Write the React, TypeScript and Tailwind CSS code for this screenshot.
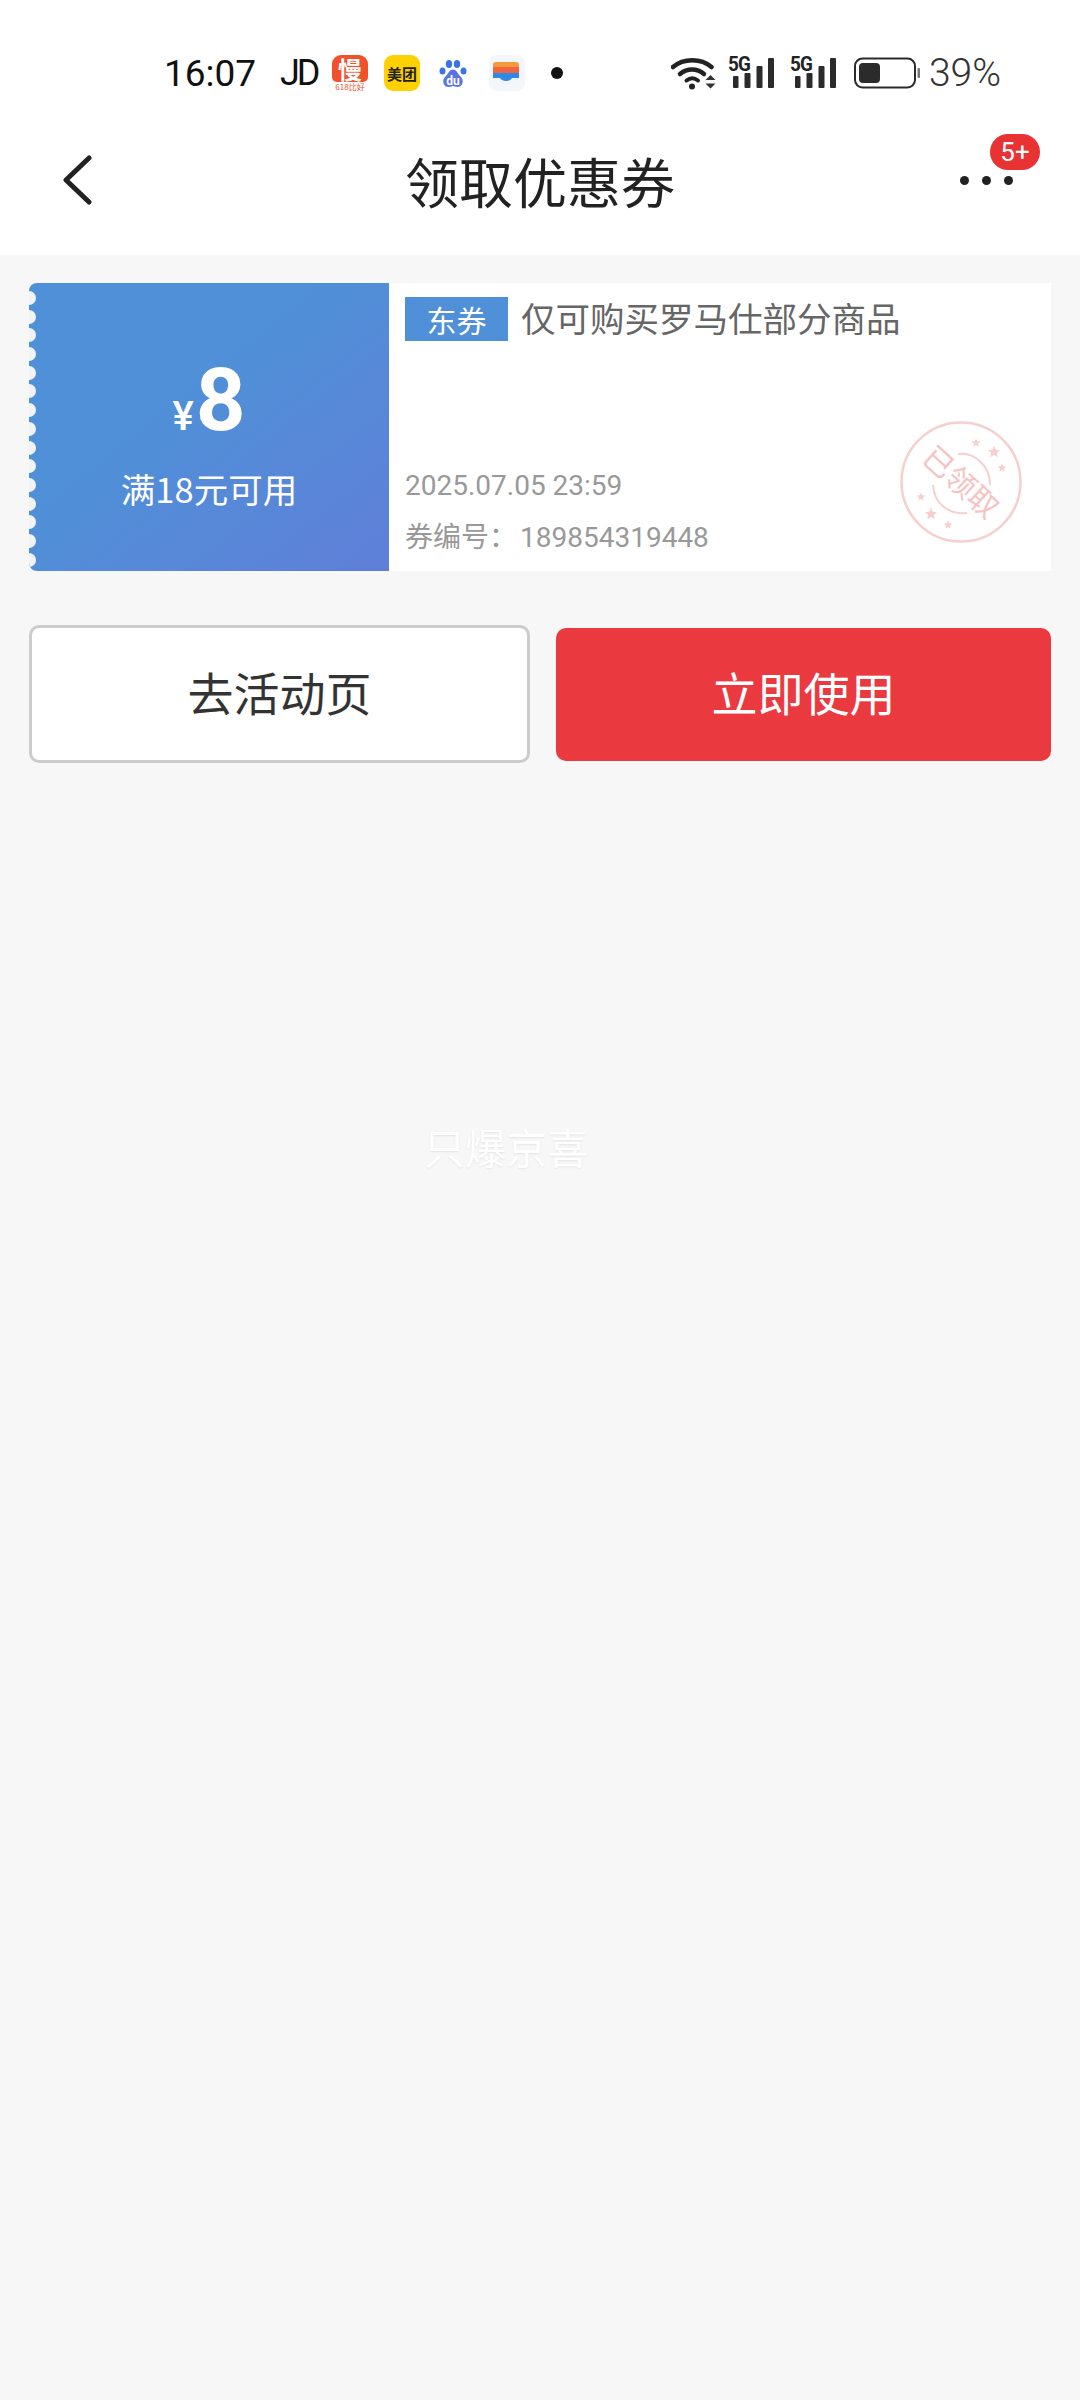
const CJK = '"Noto Sans CJK SC", "Noto Sans", sans-serif'

const SignalIcon = () => (
  <div className="relative w-[48px] h-[32px]">
    <span className="absolute left-0 top-[-3px] text-[21px] leading-[21px] font-bold text-[#222] tracking-[-1px] font-['Roboto',sans-serif] scale-x-90 origin-left">5G</span>
    <svg width="48" height="32" viewBox="0 0 48 32" className="absolute left-0 top-0" fill="#2b2b2b">
      <rect x="5" y="19" width="5.5" height="12" rx="1" />
      <rect x="16.5" y="16" width="6" height="15" rx="1" />
      <rect x="28.5" y="9" width="6" height="22" rx="1" />
      <rect x="40" y="1" width="6" height="30" rx="1" />
    </svg>
  </div>
)

const WifiIcon = () => (
  <svg width="46" height="34" viewBox="0 0 46 34" fill="none">
    <path d="M2 11C12.500 2 30 2 40.500 11" stroke="#222" strokeWidth="4.500" strokeLinecap="round" />
    <path d="M9 18C16 12 26 12 33 18" stroke="#222" strokeWidth="4.500" strokeLinecap="round" />
    <path d="M15.500 24.500C19 21.800 23.500 21.800 27 24.500" stroke="#222" strokeWidth="4" strokeLinecap="round" />
    <circle cx="21" cy="30.500" r="3" fill="#222" />
    <path d="M34.500 24L39.500 19L44.500 24ZM34.500 27.500L39.500 32.500L44.500 27.500Z" fill="#333" />
  </svg>
)

const BatteryIcon = () => (
  <svg width="66" height="32" viewBox="0 0 66 32" fill="none">
    <rect x="1" y="1.500" width="60" height="29" rx="7.500" stroke="#2b2b2b" strokeWidth="2" />
    <rect x="5" y="6" width="21" height="20" rx="4" fill="#2b2b2b" />
    <rect x="63.500" y="11" width="2.500" height="10" rx="1" fill="#777" />
  </svg>
)

const BaiduIcon = () => (
  <svg width="28" height="30" viewBox="0 0 28 30">
    <ellipse cx="3.500" cy="13" rx="3" ry="3.500" fill="#3b74e6" />
    <ellipse cx="10" cy="6" rx="3.200" ry="4" fill="#3b74e6" />
    <ellipse cx="18" cy="6" rx="3.200" ry="4" fill="#3b74e6" />
    <ellipse cx="24.500" cy="13" rx="3" ry="3.500" fill="#3b74e6" />
    <path d="M14 11.500C10 11.500 9.500 16 6 19C2.500 22.500 4.500 29 9.500 29C12 29 12.500 28 14 28C15.500 28 16 29 18.500 29C23.500 29 25.500 22.500 22 19C18.500 16 18 11.500 14 11.500Z" fill="#5b74e4" />
    <text x="14" y="27" textAnchor="middle" fontSize="12" fontWeight="700" fill="#fff" fontFamily="Roboto, sans-serif">du</text>
  </svg>
)

const WalletIcon = () => (
  <svg width="36" height="36" viewBox="0 0 36 36">
    <rect x="0" y="0" width="36" height="36" rx="8" fill="#f3f6fa" />
    <path d="M4 10a3 3 0 0 1 3-3h20a3 3 0 0 1 3 3v2H4Z" fill="#f59a3c" />
    <rect x="4" y="12" width="26" height="6" fill="#f0653f" />
    <path d="M4 18H30V23H23C21 27 13 27 11 23H4Z" fill="#2f8ae6" />
  </svg>
)

const Star = ({ x, y, r }: { x: number; y: number; r: number }) => {
  const pts = Array.from({ length: 10 }).map((_, i) => {
    const a = (Math.PI / 5) * i - Math.PI / 2
    const d = i % 2 === 0 ? r : r * 0.45
    return `${x + d * Math.cos(a)},${y + d * Math.sin(a)}`
  })
  return <polygon points={pts.join(' ')} />
}

const Stamp = () => (
  <svg width="126" height="126" viewBox="0 0 126 126" fill="none">
    <circle cx="63" cy="63" r="59.500" stroke="#f6cfcf" strokeWidth="2.500" />
    <path d="M60 35C76 33 92 46 92 66" stroke="#f6cfcf" strokeWidth="2" />
    <path d="M35 66C36 84 50 96 69 94" stroke="#f6cfcf" strokeWidth="2" />
    <g fill="#f6cfcf">
      <Star x={78} y={24} r={4.5} />
      <Star x={96} y={33} r={6.5} />
      <Star x={104} y={49} r={4.5} />
      <Star x={23} y={78} r={4.5} />
      <Star x={33} y={95} r={6.5} />
      <Star x={50} y={106} r={4.5} />
    </g>
    <text x="63" y="74" textAnchor="middle" fontSize="30" fill="#f4c4c4" transform="rotate(42 63 63)" fontFamily={CJK}>已领取</text>
  </svg>
)

export default function App() {
  return (
    <div className="relative w-[1080px] h-[2400px] bg-[#f7f7f7] overflow-hidden" style={{ fontFamily: CJK }}>
      {/* Status bar + nav */}
      <div className="bg-white h-[255px]">
        <div className="h-[146px] pl-[164px] pr-[79px] flex items-center text-[#111]">
          <span className="text-[37px] leading-none font-['Roboto',sans-serif] w-[116px]">16:07</span>
          <span className="text-[36px] leading-none font-normal font-['Roboto',sans-serif] tracking-[-3px] w-[52px]">JD</span>
          <div className="w-[36px] h-[36px] flex flex-col items-center">
            <div className="w-[36px] h-[27px] bg-[#f0502a] rounded-t-[9px] rounded-b-[5px] flex items-center justify-center text-[24px] leading-none text-white font-bold">慢</div>
            <div className="text-[8px] leading-[9px] text-[#f0502a] whitespace-nowrap">618比好</div>
          </div>
          <div className="ml-[16px] w-[36px] h-[36px] bg-[#ffd100] rounded-[9px] flex items-center justify-center text-[15px] leading-none font-bold text-[#222] whitespace-nowrap">美团</div>
          <div className="ml-[19px] w-[28px] flex justify-center"><BaiduIcon /></div>
          <div className="ml-[22px]"><WalletIcon /></div>
          <div className="ml-[26px] w-[12px] h-[12px] rounded-full bg-[#111]" />
          <div className="ml-auto flex items-center">
            <WifiIcon />
            <div className="ml-[11px]"><SignalIcon /></div>
            <div className="ml-[14px]"><SignalIcon /></div>
            <div className="ml-[16px]"><BatteryIcon /></div>
            <span className="ml-[9px] text-[39px] leading-none text-[#333] font-['Roboto',sans-serif] font-light">39%</span>
          </div>
        </div>
        <div className="mt-[-2px] h-[72px] grid grid-cols-[1fr_auto_1fr] items-center">
          <div className="pl-[62px]">
            <svg width="30" height="50" viewBox="0 0 30 50" fill="none">
              <path d="M27 3L4 25L27 47" stroke="#222" strokeWidth="5" strokeLinecap="round" strokeLinejoin="round" />
            </svg>
          </div>
          <h1 className="text-[54px] leading-none text-[#222] font-normal pt-[2px]">领取优惠券</h1>
          <div className="relative flex justify-end pr-[67px] gap-[13px]">
            <span className="w-[9px] h-[9px] rounded-full bg-[#222]" />
            <span className="w-[9px] h-[9px] rounded-full bg-[#222]" />
            <span className="w-[9px] h-[9px] rounded-full bg-[#222]" />
            <span className="absolute right-[40px] top-[-42px] w-[50px] h-[36px] rounded-full bg-[#e93232] text-white text-[26px] leading-[36px] text-center font-['Roboto',sans-serif]">5+</span>
          </div>
        </div>
      </div>

      {/* Coupon */}
      <div className="mx-[29px] mt-[28px] h-[288px] flex">
        <div className="relative w-[360px] shrink-0 overflow-hidden rounded-l-[8px] bg-gradient-to-br from-[#4f90d8] from-40% to-[#5f7fd8] text-white flex flex-col items-center">
          <div className="absolute left-[-7px] top-[8px] flex flex-col gap-[4.700px]">
            {Array.from({ length: 15 }).map((_, i) => (
              <span key={i} className="block w-[14px] h-[14px] rounded-full bg-[#f2f3f7]" />
            ))}
          </div>
          <div className="mt-[74px] h-[86px] flex items-end leading-none font-['Roboto',sans-serif]">
            <span className="text-[40px] leading-[52px] mr-[2px] font-medium">¥</span>
            <span className="text-[87px] leading-[86px] font-bold">8</span>
          </div>
          <div className="mt-[22px] text-[34.500px] leading-[46px] whitespace-nowrap">满18元可用</div>
        </div>
        <div className="relative flex-1 bg-white pl-[16px]">
          <div className="pt-[14px] flex items-start">
            <span className="w-[103px] h-[44px] bg-[#4f90d8] text-white text-[30px] leading-[44px] text-center">东券</span>
            <span className="ml-[13px] text-[34.500px] leading-[44px] text-[#666] whitespace-nowrap mt-[-2px]">仅可购买罗马仕部分商品</span>
          </div>
          <div className="mt-[128px] text-[28px] leading-[34px] text-[#999] font-['Roboto',sans-serif]">2025.07.05 23:59</div>
          <div className="mt-[15px] text-[28px] leading-[34px] text-[#999] whitespace-nowrap">券编号：<span className="font-['Roboto',sans-serif] ml-[3px]">189854319448</span></div>
          <div className="absolute right-[27px] top-[136px]"><Stamp /></div>
        </div>
      </div>

      {/* Actions */}
      <div className="mx-[29px] mt-[54px] flex items-center gap-[26px]">
        <button className="w-[501px] h-[138px] shrink-0 rounded-[10px] bg-white border-[3px] border-[#cccccc] text-[46px] text-[#333] pb-[5px]">去活动页</button>
        <button className="flex-1 h-[133px] rounded-[10px] bg-[#ea3a3f] text-[46px] text-white pb-[5px]">立即使用</button>
      </div>

      {/* Toast-like watermark */}
      <div className="absolute left-[424px] top-[1124px] text-[41px] leading-[44px] text-white [text-shadow:0_1px_2px_rgba(0,0,0,0.08)]">只爆京喜</div>
    </div>
  )
}
